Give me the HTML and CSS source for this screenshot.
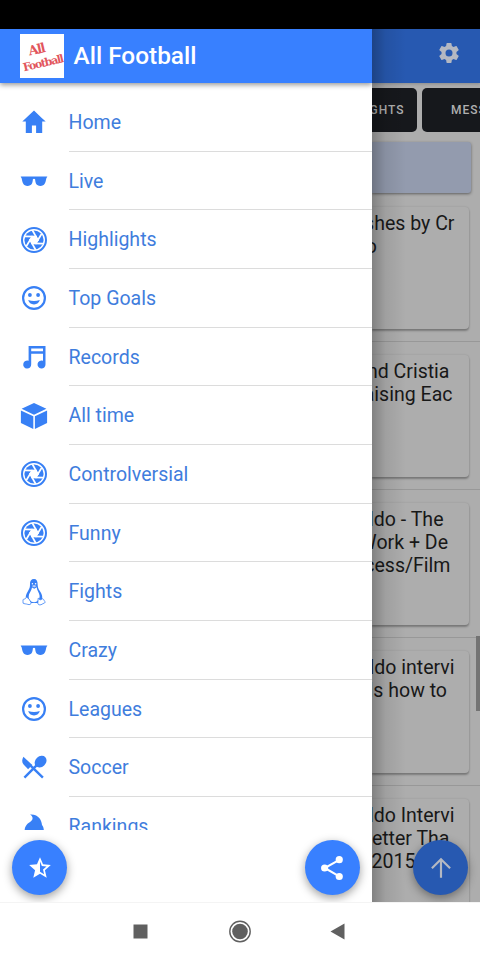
FILE: index.html
```html
<!DOCTYPE html>
<html lang="en">
<head>
<meta charset="utf-8">
<title>All Football</title>
<link rel="stylesheet" href="styles.css">
</head>
<body>
<svg width="0" height="0" class="defs">
  <symbol id="home" viewBox="0 0 28 28"><path d="M14 2.6 2.3 13.6h3.5V25h6.1v-7.5h4.2V25h6.1V13.6h3.5L21.500 9.700z"/></symbol>
  <symbol id="glasses" viewBox="0 0 28 28"><path d="M.7 9.500h26.600c-.2 1-.8 1.300-1 2-.8 4.400-1.600 7.400-5.800 7.400-4.400 0-5.100-3-5.400-6.600-.3-.8-1.900-.8-2.200 0-.3 3.600-1 6.600-5.400 6.600-4.200 0-5-3-5.800-7.400-.2-.7-.8-1-1-2z"/></symbol>
  <symbol id="aperture" viewBox="0 0 28 28">
    <circle cx="14" cy="14" r="12" fill="none" stroke="currentColor" stroke-width="2"/>
    <circle cx="14" cy="14" r="9.600"/>
    <path fill="#fff" d="M12 10.100 16.400 10.100 18.500 14 16.200 17.900 11.800 17.900 9.500 14z"/>
    <g stroke="#fff" stroke-width="1.700">
      <path id="blade" d="M18.300 14.800 12.300 4"/>
      <use href="#blade" transform="rotate(60 14 14)"/><use href="#blade" transform="rotate(120 14 14)"/>
      <use href="#blade" transform="rotate(180 14 14)"/><use href="#blade" transform="rotate(240 14 14)"/><use href="#blade" transform="rotate(300 14 14)"/>
    </g>
  </symbol>
  <symbol id="smile" viewBox="0 0 28 28"><circle cx="14" cy="14" r="10.900" fill="none" stroke="currentColor" stroke-width="2.200"/><circle cx="9.900" cy="11" r="1.900"/><circle cx="18.100" cy="11" r="1.900"/><path d="M8.200 16c3.800 1.200 7.800 1.200 11.600 0-.6 2.600-2.800 4.400-5.800 4.400S8.800 18.600 8.200 16z"/></symbol>
  <symbol id="music" viewBox="0 0 28 28"><path fill-rule="evenodd" d="M8.600 3h16.900v18.300a4 4 0 1 1-2.500-3.500V10.800H11.200v10.500a4 4 0 1 1-2.600-3.500zm2.600 2.500v2.700H23V5.500z"/></symbol>
  <symbol id="cube" viewBox="0 0 28 28"><path d="M14 .9 26.400 6.800 14 12.700 1.600 6.800zM.9 8.400 13.300 14.200V27L.9 20.900zM27.100 8.400 14.900 14.200V27l12.200-6.100z"/></symbol>
  <symbol id="penguin" viewBox="0 0 28 28">
    <path d="M14 1c-2.800 0-4.200 2-4 5 .1 3-.4 4.500-2.100 7.200-1.600 2.700-2.800 5.200-1.800 8L9 25h10l3-3.500c.8-3-.2-5.600-2-8.200-1.900-2.800-2.300-4.200-2.400-7.300C17.600 3 16.600 1 14 1z"/>
    <path fill="#fff" d="M12 9.500 14.300 10.700l2.400-1.400c.2 3.500 2.500 5.300 2.900 8.500.2 3.700-2.300 6.400-5.500 6.400-3.500 0-5.500-2.600-5.400-5.900.1-3.200 2.900-5.400 3.300-8.800z"/>
    <circle cx="12.400" cy="5.700" r=".7" fill="#fff"/><circle cx="15.600" cy="5.700" r=".8" fill="#fff"/><path fill="#bcd0fa" d="m11.800 7.900 2.200-1 2.600 1-2.400 1.600z"/>
    <g fill="#fff" stroke="currentColor" stroke-width=".8"><path d="M6.600 19.300c1.700.2 3.500 3.300 4.400 5.200.3 2-1.500 2.500-3.200 1.900-1.600-.6-3.800-.5-4.700-1.200-.5-1 .3-1.800-.1-3.300.2-1.100 1.700-.6 2.300-1.200.5-.5.600-1.400 1.300-1.400zM18.200 20.200c.7-.2.700 1.300 2 1.600 1.500 0 1.800-1.300 2.800-1 .9.500.4 1.700 1.600 2.300 1.200.7.600 1.600-.6 2.100-1.500.5-2.500 1.700-4.100 1.700-1.900 0-2.400-1.300-2-3z"/></g>
  </symbol>
  <symbol id="utensils" viewBox="0 0 28 28"><path d="M3.400 2.800 12.300 11l-4.200 4.200L3.600 10.500C1.600 8.300 2 5 3.400 2.800z"/><ellipse cx="20.600" cy="7.600" rx="6.500" ry="5.200" transform="rotate(-43 20.600 7.600)"/><path fill="none" stroke="currentColor" stroke-width="2.400" d="M17.800 10.200 4.400 23.600M10.300 11.300 22.900 23.600"/></symbol>
  <symbol id="poop" viewBox="0 0 28 28"><path d="M10 2.600c3.800-.4 7.700 1 9.900 4.200 1.200 1.800 1.800 4 2.100 6.200 1.300 1.500 1.900 3.500 1.900 7H4.600c-.1-3.400.6-5.300 2.300-7.400 1.100-1.400 2.800-2.200 4.300-3.500 2.100-1.900 1.900-4.700-1.200-6.500z"/></symbol>
</svg>

<div class="phone">
  <div class="statusbar"></div>
  <div class="stage">
    <aside class="drawer">
      <header class="brand">
        <div class="logo"><span class="logo-text"><span>All</span><span>Football</span></span></div>
        <h1>All Football</h1>
      </header>
      <nav class="menu">
        <a class="item"><svg><use href="#home"/></svg><span>Home</span></a>
        <a class="item"><svg><use href="#glasses"/></svg><span>Live</span></a>
        <a class="item"><svg><use href="#aperture"/></svg><span>Highlights</span></a>
        <a class="item"><svg><use href="#smile"/></svg><span>Top Goals</span></a>
        <a class="item"><svg><use href="#music"/></svg><span>Records</span></a>
        <a class="item"><svg><use href="#cube"/></svg><span>All time</span></a>
        <a class="item"><svg><use href="#aperture"/></svg><span>Controlversial</span></a>
        <a class="item"><svg><use href="#aperture"/></svg><span>Funny</span></a>
        <a class="item"><svg><use href="#penguin"/></svg><span>Fights</span></a>
        <a class="item"><svg><use href="#glasses"/></svg><span>Crazy</span></a>
        <a class="item"><svg><use href="#smile"/></svg><span>Leagues</span></a>
        <a class="item"><svg><use href="#utensils"/></svg><span>Soccer</span></a>
        <a class="item"><svg><use href="#poop"/></svg><span>Rankings</span></a>
      </nav>
      <footer class="actions">
        <button class="fab"><svg viewBox="0 0 24 24"><path fill-rule="evenodd" d="m22 9.240-7.190-.62L12 2 9.190 8.630 2 9.240l5.460 4.730L5.820 21 12 17.270 18.180 21l-1.630-7.030L22 9.240zM12 15.400V6.100l1.710 4.040 4.380.38-3.320 2.880 1 4.280L12 15.400z"/></svg></button>
        <button class="fab"><svg viewBox="0 0 24 24"><path fill="none" stroke="currentColor" stroke-width="1.900" d="M18.700 4.500 5.300 12l13.400 7.800"/><circle cx="18.700" cy="4.300" r="3.300"/><circle cx="5.200" cy="12" r="3.300"/><circle cx="18.700" cy="19.800" r="3.300"/></svg></button>
      </footer>
    </aside>
    <main class="app">
      <header class="toolbar"><svg viewBox="0 0 24 24"><path d="M19.430 12.980c.04-.32.070-.64.070-.98s-.03-.66-.07-.98l2.110-1.650a.5.5 0 0 0 .12-.64l-2-3.460a.5.5 0 0 0-.61-.22l-2.490 1a7.300 7.300 0 0 0-1.690-.98l-.38-2.650A.49.490 0 0 0 14 2h-4a.49.490 0 0 0-.49.420l-.38 2.650c-.61.250-1.170.590-1.690.98l-2.490-1a.5.5 0 0 0-.61.220l-2 3.460a.49.490 0 0 0 .12.640l2.110 1.650a7.900 7.900 0 0 0 0 1.960l-2.110 1.650a.5.5 0 0 0-.12.640l2 3.460c.12.220.39.300.61.220l2.490-1c.52.400 1.080.730 1.690.98l.38 2.650c.03.240.24.420.49.420h4c.25 0 .46-.18.490-.42l.38-2.650c.61-.25 1.170-.59 1.690-.98l2.490 1c.23.090.49 0 .61-.22l2-3.460a.5.5 0 0 0-.12-.64l-2.110-1.650zM12 15.500a3.500 3.500 0 1 1 0-7 3.500 3.500 0 0 1 0 7z"/></svg></header>
      <div class="tabs"><span class="tab tab-end">HIGHLIGHTS</span><span class="tab tab-start">MESSI</span></div>
      <div class="banner"></div>
      <section class="feed">
        <article class="row"><div class="card"><p class="e454">shes by Cr</p><p class="e377">o</p></div></article>
        <article class="row"><div class="card"><p class="e449">and Cristia</p><p class="e452">raising Eac</p></div></article>
        <article class="row"><div class="card"><p class="e444">ldo - The</p><p class="e448">Work + De</p><p class="e451">cess/Film</p></div></article>
        <article class="row"><div class="card"><p class="e454">ldo intervi</p><p class="e447">ls how to</p></div></article>
        <article class="row"><div class="card"><p class="e454">ldo Intervi</p><p class="e449">etter Tha</p><p class="e415">2015</p></div></article>
      </section>
      <div class="scrollbar"></div>
      <button class="fab fab-up"><svg viewBox="0 0 24 24"><path fill="none" stroke="currentColor" stroke-width="2" d="M12 21V4.500M3.600 12.300 12 4 20.400 12.300"/></svg></button>
      <div class="edge"></div>
    </main>
  </div>
  <footer class="navbar">
    <svg viewBox="0 0 240 40"><path d="M13.500 12.500h14v14h-14zM224.500 11.500v16l-14-8z"/><circle cx="120" cy="19.500" r="7.800"/><circle cx="120" cy="19.500" r="10.200" fill="none" stroke="#606060" stroke-width="1.400"/></svg>
  </footer>
</div>
</body>
</html>
```
FILE: styles.css
```css
* { box-sizing: border-box; }
body { margin: 0; font-family: Roboto, sans-serif; }
h1, p { margin: 0; }
svg { display: block; fill: currentColor; }
.defs { position: absolute; }
.phone { width: 480px; height: 960px; display: flex; flex-direction: column; overflow: hidden; background: #fff; }
.statusbar { height: 29px; background: #000; flex: none; }
.stage { height: 873px; display: grid; grid-template-columns: 372px 1fr; }

.drawer { display: flex; flex-direction: column; min-height: 0; background: #fff; }
.brand { height: 54px; flex: none; display: flex; align-items: center; gap: 10px; padding-left: 19.5px; background: #3880ff; color: #fff; box-shadow: 0 2px 5px rgba(0,0,0,.4); clip-path: inset(0 0 -12px 0); }
.brand h1 { font-size: 24.4px; font-weight: 500; line-height: 54px; }
.logo { width: 44px; height: 44px; background: #fff; display: flex; align-items: center; justify-content: center; overflow: hidden; }
.logo-text { display: flex; flex-direction: column; transform: rotate(-13deg); font: bold 13px/15px "DejaVu Serif", serif; color: #e2565c; letter-spacing: -1.400px; }
.logo-text span:first-child { padding-left: 9px; }
.logo-text span:last-child { font-size: 11px; letter-spacing: -1.200px; }
.menu { height: 737px; margin-top: 10px; flex: none; overflow: hidden; }
.item { height: 58.670px; display: flex; align-items: center; padding-left: 20px; gap: 20.500px; font-size: 19.550px; color: #3f7ddd; }
.item svg { width: 28px; height: 28px; flex: none; color: #3880f5; }
.item span { flex: 1; height: 58.670px; line-height: 60px; border-bottom: 1px solid #dcdcdc; }
.actions { display: flex; justify-content: space-between; padding: 10px 12.500px 0 12px; }
.fab { width: 55px; height: 55px; border: 0; border-radius: 50%; padding: 0; display: flex; align-items: center; justify-content: center; background: #3880ff; color: #fff; box-shadow: 0 3px 10px rgba(0,0,0,.38); }
.fab svg { width: 26px; height: 26px; }

.app { position: relative; overflow: hidden; background: #adadad; }
.toolbar { height: 54px; display: flex; align-items: center; justify-content: flex-end; padding: 0 19.500px 6px 0; background: #2759b1; color: #b4b8c2; box-shadow: 0 1px 3px rgba(0,0,0,.2); }
.toolbar svg { width: 24px; height: 24px; }
.tabs { display: flex; gap: 5px; padding-top: 5px; height: 49px; }
.tab { height: 44px; flex: none; border-radius: 5px; background: #16181c; color: #b0b0b0; font-size: 12px; font-weight: 500; line-height: 44px; letter-spacing: 1px; }
.tab-end { width: 45px; border-top-left-radius: 0; border-bottom-left-radius: 0; display: flex; justify-content: flex-end; padding-right: 12.500px; overflow: hidden; }
.tab-start { width: 100px; padding-left: 29px; }
.banner { height: 51px; margin: 10px 9px 0 0; background: #939bae; border-radius: 0 3px 3px 0; box-shadow: 0 1px 3px rgba(0,0,0,.45); }
.feed { padding-top: 1px; }
.row { height: 148px; padding: 13px 11.500px 0 0; border-bottom: 1.500px solid #989898; }
.card { height: 122px; padding-top: 5px; border-radius: 0 4px 4px 0; box-shadow: 0 2px 2px rgba(0,0,0,.28), 0 0 2px rgba(0,0,0,.15); background: #adadad; color: #181818; }
.card p { font-size: 19.550px; line-height: 23px; white-space: nowrap; display: flex; justify-content: flex-end; }
.card .e454 { padding-right: 14px; }
.card .e452 { padding-right: 16px; }
.card .e451 { padding-right: 18px; }
.card .e449 { padding-right: 19px; }
.card .e448 { padding-right: 20.500px; }
.card .e447 { padding-right: 21.500px; }
.card .e444 { padding-right: 25px; }
.card .e415 { padding-right: 53px; }
.card .e377 { padding-right: 91.500px; }
.scrollbar { position: absolute; right: 0; top: 607px; width: 4.500px; height: 75px; background: #737373; }
.fab-up { position: absolute; right: 12px; bottom: 7px; background: #2759b1; color: #b4b8c2; }
.edge { position: absolute; inset: 0 auto 0 0; width: 34px; background: linear-gradient(90deg, rgba(0,0,0,.25), rgba(0,0,0,.08) 40%, transparent); }
.navbar { height: 58px; display: flex; justify-content: center; align-items: center; background: #fff; border-top: 1px solid #f4f4f4; color: #606060; }
.navbar svg { width: 240px; height: 40px; }
```
